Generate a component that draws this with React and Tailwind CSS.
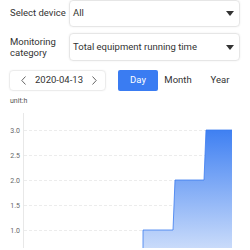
const TABS = [
  { label: 'Day', w: 'w-[40px]' },
  { label: 'Month', w: 'w-[40px]' },
  { label: 'Year', w: 'w-[44px]' },
]

function Caret() {
  return (
    <svg width="8" height="5" viewBox="0 0 8 5" className="shrink-0">
      <path d="M0 0h8L4 5z" fill="#333" />
    </svg>
  )
}

function Chevron({ dir }) {
  return (
    <svg width="5" height="9" viewBox="0 0 5 9" className="shrink-0">
      <path
        d={dir === 'left' ? 'M4.5 0.5L0.8 4.5L4.5 8.5' : 'M0.5 0.5L4.2 4.5L0.5 8.5'}
        fill="none"
        stroke="#666"
        strokeWidth="1"
      />
    </svg>
  )
}

function SelectBox({ value, className = '' }) {
  return (
    <div className={`flex-1 flex items-center justify-between rounded border border-[#e6e6e6] shadow-[0_0_2px_rgba(0,0,0,0.08)] pl-[3px] pr-[5px] ${className}`}>
      <span className="text-[9.5px] text-[#333]">{value}</span>
      <Caret />
    </div>
  )
}

function Chart() {
  // 0.5 unit = 25px, 3.0 sits at y=24
  const ys = [
    { v: '3.0', y: 24 },
    { v: '2.5', y: 49 },
    { v: '2.0', y: 74 },
    { v: '1.5', y: 99 },
    { v: '1.0', y: 124 },
  ]
  return (
    <svg width="250" height="142" viewBox="0 0 250 142" className="block">
      <defs>
        <linearGradient id="area" x1="0" y1="0" x2="0" y2="1">
          <stop offset="0" stopColor="#3f80f2" />
          <stop offset="1" stopColor="#c9dbfa" />
        </linearGradient>
      </defs>
      <line x1="23.5" y1="7" x2="23.5" y2="142" stroke="#e8e8e8" />
      {ys.map(t => (
        <g key={t.v}>
          <line x1="24" y1={t.y + 0.5} x2="206" y2={t.y + 0.5} stroke="#ececec" strokeDasharray="3 2" />
          <text x="20" y={t.y + 2.5} fontSize="7" fill="#666" textAnchor="end" fontFamily="Roboto, sans-serif">{t.v}</text>
        </g>
      ))}
      <path
        d="M143 142 L143 124 L173 124 L175 74 L204 74 L206 24 L232 24 L232 142 Z"
        fill="url(#area)"
      />
      <path
        d="M143 142 L143 124 L173 124 L175 74 L204 74 L206 24 L232 24"
        fill="none"
        stroke="#3b7bef"
        strokeWidth="0.8"
      />
    </svg>
  )
}

export default function App() {
  return (
    <div className="w-[250px] h-[250px] overflow-hidden bg-white font-['Roboto',sans-serif] text-[#333]">
      <div className="flex items-center h-[27px] px-[10px]">
        <span className="w-[59px] text-[9.5px] whitespace-nowrap">Select device</span>
        <SelectBox value="All" className="h-[27px]" />
      </div>
      <div className="flex items-center mt-[6px] h-[28px] px-[10px]">
        <span className="w-[59px] text-[9.5px] leading-[11px]">Monitoring<br />category</span>
        <SelectBox value="Total equipment running time" className="h-[28px]" />
      </div>
      <div className="flex items-center mt-[9px] pl-[9px] h-[21px]">
        <div className="flex items-center justify-between w-[97px] h-[21px] rounded border border-[#ececec] shadow-[0_0_2px_rgba(0,0,0,0.06)] pl-[11px] pr-[8px] text-[9.5px]">
          <Chevron dir="left" />
          <span>2020-04-13</span>
          <Chevron dir="right" />
        </div>
        <div className="flex items-center ml-[12px]">
          {TABS.map(t => (
            <div
              key={t.label}
              className={
                t.label === 'Day'
                  ? `${t.w} h-[21px] flex items-center justify-center rounded-[2px] bg-[#3a7cf2] text-white text-[9.5px]`
                  : `${t.w} h-[21px] flex items-center justify-center text-[9.5px] text-[#333]`
              }
            >
              {t.label}
            </div>
          ))}
        </div>
      </div>
      <div className="pl-[10px] mt-[5px] text-[7px] leading-[10px] text-[#555]">unit:h</div>
      <Chart />
    </div>
  )
}
